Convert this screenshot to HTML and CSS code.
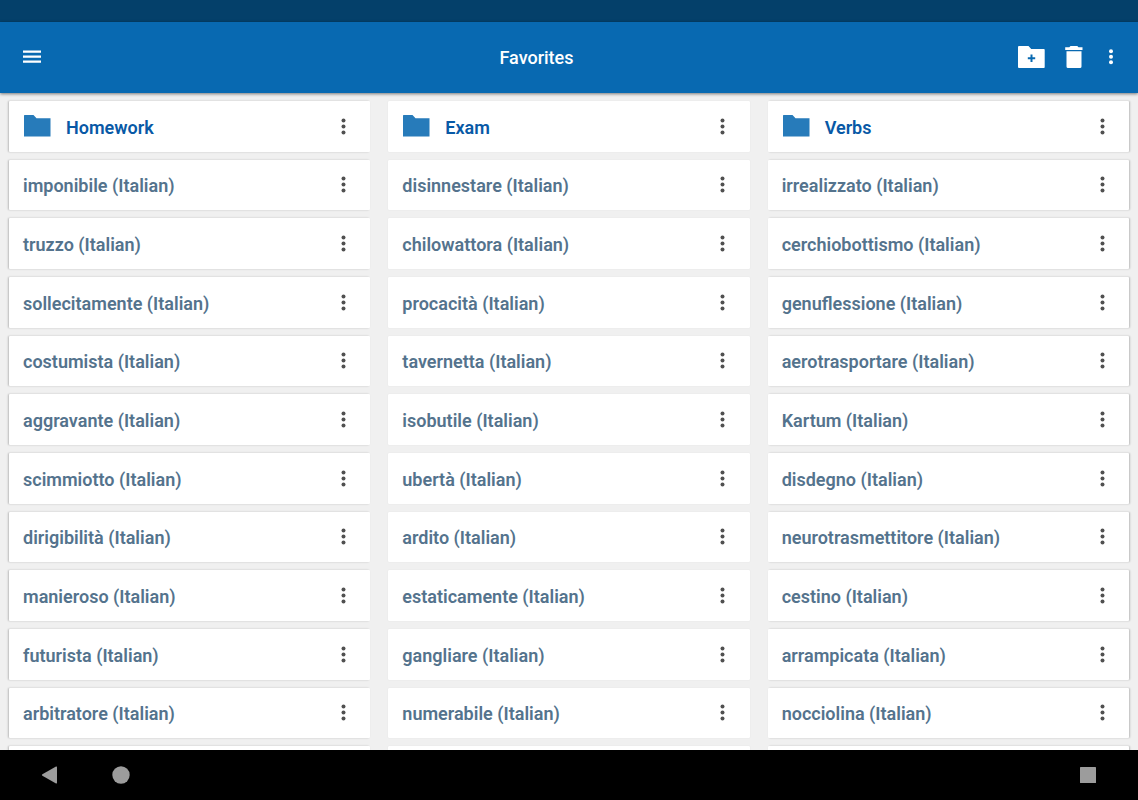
FILE: index.html
```html
<!DOCTYPE html>
<html lang="en">
<head>
  <meta charset="UTF-8">
  <meta name="viewport" content="width=device-width, initial-scale=1">
  <title>Favorites</title>
  <link rel="stylesheet" href="styles.css">
</head>
<body>
  <div class="status-bar"></div>

  <header class="toolbar">
    <button type="button" class="tool menu" aria-label="Menu">
      <svg width="18" height="15" viewBox="0 0 18 15"><path d="M0 .5h18v2.300H0zM0 5.500h18v2.300H0zM0 10.500h18v2.300H0z"/></svg>
    </button>
    <h1>Favorites</h1>
    <button type="button" class="tool new-folder" aria-label="New folder">
      <svg width="27" height="23" viewBox="0 0 27 23"><path fill-rule="evenodd" d="M1 0h9.500l2.700 3H26q.7 0 .7 1v17q0 1-.7 1H1q-1 0-1-1V1q0-1 1-1zM12.500 8.500v2.700H9.800v2h2.700v2.800h2v-2.800h2.700v-2h-2.700V8.500z"/></svg>
    </button>
    <button type="button" class="tool" aria-label="Delete">
      <svg width="18" height="23" viewBox="0 0 18 23"><path d="M5.500 0h6.800l1.200 1.200H17.500V4H.2V1.200H4.300zM1.500 5.200h15V20.500q0 1.500-1.500 1.500h-12q-1.500 0-1.500-1.500z"/></svg>
    </button>
    <button type="button" class="tool more" aria-label="More options">
      <svg width="4" height="17" viewBox="0 0 4 17"><circle cx="2" cy="2.200" r="2"/><circle cx="2" cy="7.700" r="2"/><circle cx="2" cy="13.200" r="2"/></svg>
    </button>
  </header>

  <main class="content">
    <div class="list" id="list"></div>
  </main>

  <nav class="nav-bar">
    <button type="button" class="nav-btn" aria-label="Back">
      <svg width="16" height="18" viewBox="0 0 16 18"><path d="M15 .6Q16 .2 16 1.200v15.600q0 1-1 .6L1.400 9.800Q.3 9 1.400 8.200z"/></svg>
    </button>
    <button type="button" class="nav-btn" aria-label="Home">
      <svg width="18" height="18" viewBox="0 0 18 18"><circle cx="9" cy="9" r="8.700"/></svg>
    </button>
    <button type="button" class="nav-btn recent" aria-label="Recent apps">
      <svg width="16" height="16" viewBox="0 0 16 16"><rect width="16" height="16" rx="0.600"/></svg>
    </button>
  </nav>

  <script src="script.js"></script>
</body>
</html>
```

FILE: styles.css
```css
* {
  box-sizing: border-box;
}

body {
  margin: 0;
  height: 100vh;
  display: flex;
  flex-direction: column;
  font-family: Roboto, sans-serif;
  background-color: #f0f0f0;
}

button {
  display: flex;
  align-items: center;
  justify-content: center;
  padding: 0;
  border: none;
  background: none;
  cursor: pointer;
}

svg {
  display: block;
  fill: currentColor;
}

.status-bar {
  height: 22px;
  background-color: #04406a;
}

.toolbar {
  display: flex;
  align-items: center;
  height: 71px;
  padding-right: 11px;
  background-color: #0869b1;
  color: #fff;
  box-shadow: 0 1px 3px rgba(0, 0, 0, 0.5);
  z-index: 1;
}

.toolbar h1 {
  flex: 1;
  margin: 0;
  font-size: 18px;
  font-weight: 500;
  text-align: center;
}

.tool {
  width: 42px;
  height: 48px;
  color: #fff;
}

.tool.menu {
  width: 64px;
}

.tool.new-folder {
  width: 44px;
}

.tool.more {
  width: 32px;
}

.content {
  flex: 1;
  min-height: 0;
  overflow-y: auto;
  scrollbar-width: none;
}

/* a bit taller than the screen, so the last row peeks in at the bottom */
.list {
  display: grid;
  grid-template-columns: repeat(3, 1fr);
  grid-auto-rows: minmax(40px, 1fr);
  gap: 8px 18px;
  height: calc(100% + 47px);
  padding: 8px 9px 0;
}

.card {
  display: flex;
  align-items: center;
  padding: 0 10px 0 14px;
  border-radius: 1px;
  background-color: #fff;
  color: #54738d;
  font-size: 18px;
  font-weight: 600;
  box-shadow: 0 0 1px rgba(0, 0, 0, 0.12);
}

.card:nth-child(3n + 1) {
  box-shadow: -1px 0 2px rgba(0, 0, 0, 0.22);
}

.card:nth-child(3n) {
  box-shadow: 1px 0 2px rgba(0, 0, 0, 0.22);
}

.card.folder {
  color: #0859a6;
}

.folder-icon {
  margin: 0 15px 0 1px;
  fill: #277bba;
}

.card .name {
  flex: 1;
  padding-top: 2px;
}

.card-more {
  width: 34px;
  height: 40px;
  color: #505050;
}

.nav-bar {
  display: flex;
  align-items: center;
  height: 50px;
  padding: 0 26px 0 25px;
  background-color: #000;
}

.nav-btn {
  width: 48px;
  height: 48px;
  margin-right: 24px;
  color: #9c9c9c;
}

.nav-btn.recent {
  margin: 0 0 0 auto;
}
```

FILE: script.js
```js
const folders = ['Homework', 'Exam', 'Verbs'];

const words = [
  'imponibile', 'disinnestare', 'irrealizzato',
  'truzzo', 'chilowattora', 'cerchiobottismo',
  'sollecitamente', 'procacità', 'genuflessione',
  'costumista', 'tavernetta', 'aerotrasportare',
  'aggravante', 'isobutile', 'Kartum',
  'scimmiotto', 'ubertà', 'disdegno',
  'dirigibilità', 'ardito', 'neurotrasmettitore',
  'manieroso', 'estaticamente', 'cestino',
  'futurista', 'gangliare', 'arrampicata',
  'arbitratore', 'numerabile', 'nocciolina'
];

const folderIcon = '<svg class="folder-icon" width="27" height="22" viewBox="0 0 27 22"><path d="M.5 0h9l3 3.200h14V21.500H0V.5z"/></svg>';
const moreIcon = '<svg width="5" height="17" viewBox="0 0 5 17"><circle cx="2.500" cy="2.500" r="2"/><circle cx="2.500" cy="8.500" r="2"/><circle cx="2.500" cy="14.500" r="2"/></svg>';

function card(name, icon, type) {
  return `<article class="card ${type}">${icon}<span class="name">${name}</span>
    <button type="button" class="card-more" aria-label="Options for ${name}">${moreIcon}</button></article>`;
}

let html = '';
folders.forEach(f => html += card(f, folderIcon, 'folder'));
words.forEach(w => html += card(`${w} (Italian)`, '', 'word'));

// next row, not loaded yet
html += '<article class="card"></article>'.repeat(3);

document.getElementById('list').innerHTML = html;
```
